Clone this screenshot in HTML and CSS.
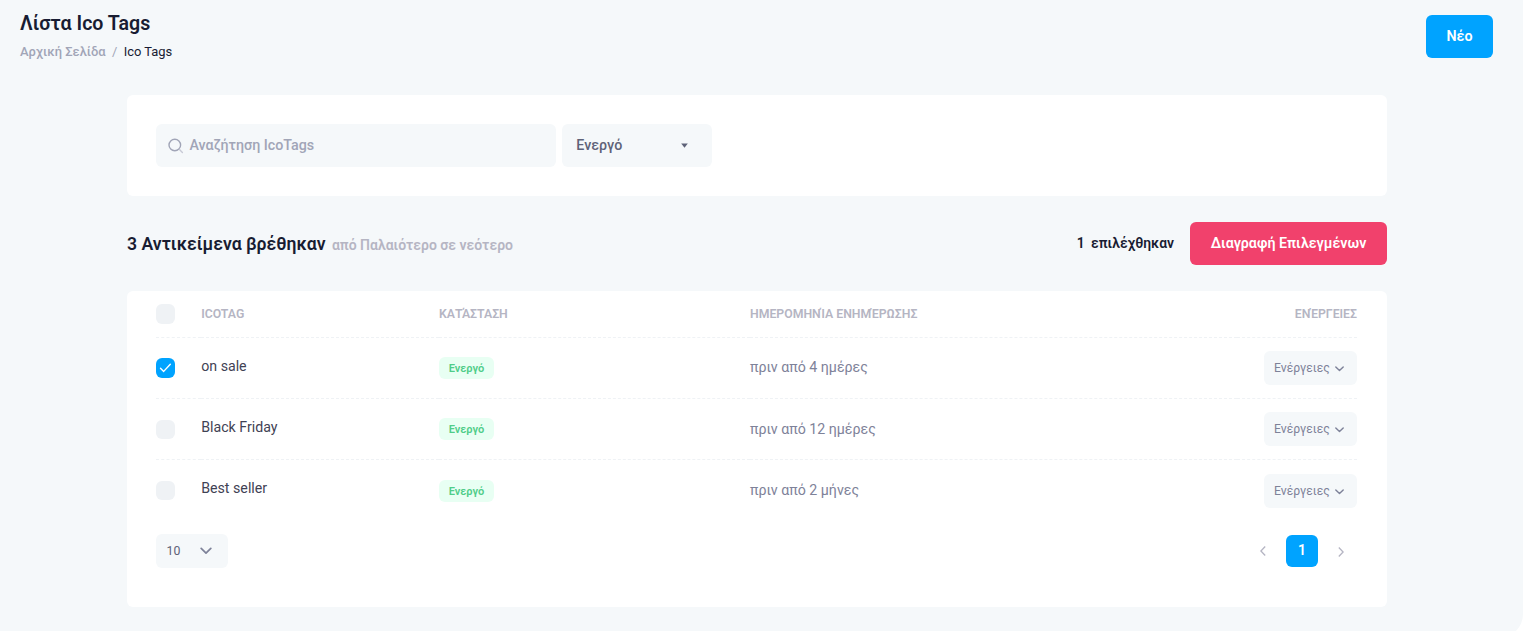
FILE: index.html
```html
<!DOCTYPE html>
<html lang="en">
<head>
<meta charset="utf-8">
<title>Ico Tags</title>
<link rel="stylesheet" href="styles.css">
</head>
<body>
<div class="page">
  <header class="toolbar">
    <div class="toolbar-titles">
      <h1 class="page-title">Λίστα Ico Tags</h1>
      <nav class="breadcrumb"><a class="crumb-link">Αρχική Σελίδα</a><span class="crumb-sep">/</span><span class="crumb-current">Ico Tags</span></nav>
    </div>
    <button class="btn btn-primary">Νέο</button>
  </header>
  <main class="content">
    <section class="card filters">
      <div class="search">
        <svg class="search-icon" width="16" height="16" viewBox="0 0 16 16" fill="none" stroke-linecap="round"><circle cx="6.8" cy="7" r="5.8" stroke="#a1a5b7" stroke-width="1.4"/><path d="M11.5 11.5L14.4 14.4" stroke="#c8cad6" stroke-width="1.4"/></svg>
        <span>Αναζήτηση IcoTags</span>
      </div>
      <div class="status-select">
        <span>Ενεργό</span>
        <svg width="7" height="5" viewBox="0 0 7 5"><path d="M0.2 0.5H6.8L3.5 4.8Z" fill="#5e6278"/></svg>
      </div>
    </section>
    <div class="results-bar">
      <h2 class="results-title">3 Αντικείμενα βρέθηκαν <span class="results-sort">από Παλαιότερο σε νεότερο</span></h2>
      <div class="selected"><span class="selected-count">1</span>επιλέχθηκαν</div>
      <button class="btn btn-danger">Διαγραφή Επιλεγμένων</button>
    </div>
    <section class="card list">
      <div class="row row-head">
        <div class="cell"><span class="check"></span></div>
        <div class="cell">ICOTAG</div>
        <div class="cell">ΚΑΤΆΣΤΑΣΗ</div>
        <div class="cell">ΗΜΕΡΟΜΗΝΊΑ ΕΝΗΜΈΡΩΣΗΣ</div>
        <div class="cell cell-end">ΕΝΈΡΓΕΙΕΣ</div>
      </div>
      <div class="row">
        <div class="cell"><span class="check checked"><svg width="13" height="10" viewBox="0 0 13 10"><path d="M1.5 5.2L4.7 8.4L11.3 1.2" fill="none" stroke="#fff" stroke-width="1.4" stroke-linecap="round" stroke-linejoin="round"/></svg></span></div>
        <div class="cell name">on sale</div>
        <div class="cell"><span class="badge">Ενεργό</span></div>
        <div class="cell date">πριν από 4 ημέρες</div>
        <div class="cell cell-end"><button class="actions">Ενέργειες<svg class="chevron" width="9" height="6" viewBox="0 0 9 6"><path d="M0.8 0.9L4.5 4.6L8.2 0.9"/></svg></button></div>
      </div>
      <div class="row">
        <div class="cell"><span class="check"></span></div>
        <div class="cell name">Black Friday</div>
        <div class="cell"><span class="badge">Ενεργό</span></div>
        <div class="cell date date-mid">πριν από 12 ημέρες</div>
        <div class="cell cell-end"><button class="actions">Ενέργειες<svg class="chevron" width="9" height="6" viewBox="0 0 9 6"><path d="M0.8 0.9L4.5 4.6L8.2 0.9"/></svg></button></div>
      </div>
      <div class="row row-last">
        <div class="cell"><span class="check"></span></div>
        <div class="cell name">Best seller</div>
        <div class="cell"><span class="badge">Ενεργό</span></div>
        <div class="cell date">πριν από 2 μήνες</div>
        <div class="cell cell-end"><button class="actions">Ενέργειες<svg class="chevron" width="9" height="6" viewBox="0 0 9 6"><path d="M0.8 0.9L4.5 4.6L8.2 0.9"/></svg></button></div>
      </div>
      <footer class="list-footer">
        <div class="page-size"><span>10</span><svg class="chevron chevron-lg" width="12" height="8" viewBox="0 0 12 8"><path d="M1.2 1.4L6 6.2L10.8 1.4"/></svg></div>
        <nav class="pager">
          <svg class="pager-arrow" width="6" height="10" viewBox="0 0 6 10"><path d="M5.2 0.5L0.9 5L5.2 9.5"/></svg>
          <span class="pager-page">1</span>
          <svg class="pager-arrow pager-next" width="6" height="10" viewBox="0 0 6 10"><path d="M0.8 0.5L5.1 5L0.8 9.5"/></svg>
        </nav>
      </footer>
    </section>
  </main>
</div>
</body>
</html>
```
FILE: styles.css
```css
* { box-sizing: border-box; }
html, body { margin: 0; height: 631px; overflow: hidden; background: #fff; }
body { font-family: Roboto, "Noto Sans", sans-serif; font-size: 13px; line-height: 1.5; color: #181c32; }
h1, h2 { margin: 0; font-weight: 600; }
button { border: 0; margin: 0; font-family: inherit; }
svg { display: block; flex: none; }
.page { width: 1523px; height: 638px; background: #f5f8fa; border-radius: 0 0 24px 0; }
.toolbar { height: 95px; padding: 15px 30px 0 20px; display: flex; justify-content: space-between; align-items: flex-start; }
.toolbar-titles { margin-top: -3px; }
.page-title { font-size: 19.6px; line-height: 24px; }
.breadcrumb { display: flex; margin-top: 6px; font-size: 12.95px; line-height: 20px; }
.crumb-link { color: #a1a5b7; font-weight: 500; }
.crumb-sep { width: 18px; text-align: center; color: #a1a5b7; }
.crumb-current { color: #181c32; }
.btn { height: 43px; border-radius: 6px; color: #fff; font-size: 14.25px; font-weight: 600; text-align: center; padding: 0 0 1px; }
.btn-primary { width: 67px; background: #00a3ff; }
.btn-danger { width: 197px; background: #f1416c; }
.content { width: 1260px; margin-left: 127px; }
.card { background: #fff; border-radius: 6px; }
.filters { height: 101px; padding: 29px; display: flex; gap: 6px; }
.search, .status-select { height: 43px; background: #f5f8fa; border-radius: 6px; display: flex; align-items: center; font-size: 14.25px; font-weight: 500; }
.search { width: 400px; padding-left: 12px; gap: 5.4px; color: #a1a5b7; }
.status-select { width: 150px; padding: 0 24px 0 14.3px; justify-content: space-between; color: #5e6278; }
.results-bar { height: 95px; display: flex; align-items: center; }
.results-title { flex: 1; font-size: 17.63px; padding-top: 1px; }
.results-sort { color: #b5b5c3; font-size: 14px; margin-left: 2px; }
.selected { font-size: 13.9px; font-weight: 600; margin-right: 16px; }
.selected-count { margin-right: 6.5px; }
.list { height: 316px; padding: 0 30px 0 29px; }
.row { display: grid; grid-template-columns: 45.2px 237.8px 311px 1fr 120px; height: 61px; }
.row-head { height: 47px; color: #b5b5c3; font-size: 12.27px; font-weight: 600; }
.cell { display: flex; align-items: center; border-bottom: 1px dashed #eff2f5; }
.row-last .cell { border-bottom: 0; }
.cell-end { justify-content: flex-end; }
.check { width: 19px; height: 19px; border-radius: 6px; background: #eff2f5; display: flex; align-items: center; justify-content: center; }
.row-head .check, .checked { height: 20px; }
.checked { background: #00a3ff; }
.name { font-size: 14.2px; color: #3f4254; padding-bottom: 3px; }
.badge { width: 55px; height: 22px; border-radius: 6px; background: #e8fff3; color: #50cd89; font-size: 11.05px; font-weight: 600; line-height: 23px; text-align: center; }
.date { font-size: 14.2px; color: #7e8299; }
.date-mid { padding-top: 1px; }
.actions { width: 93px; height: 34px; border-radius: 6px; background: #f5f8fa; color: #7e8299; font-size: 12.2px; font-weight: 400; display: flex; align-items: center; padding: 0 0 1px 10px; gap: 5px; }
.actions .chevron { margin-top: 3px; }
.row-last .actions { padding-bottom: 0; }
.row-last .actions .chevron { margin-top: 2px; }
.chevron { fill: none; stroke: #7e8299; stroke-width: 1.4; stroke-linecap: round; stroke-linejoin: round; }
.chevron-lg { stroke-width: 1.7; }
.list-footer { display: flex; justify-content: space-between; align-items: flex-start; padding-top: 13px; }
.page-size { width: 72px; height: 34px; border-radius: 6px; background: #f5f8fa; color: #5e6278; font-size: 12.3px; display: flex; align-items: center; justify-content: space-between; padding: 0 16px 0 10.5px; }
.pager { display: flex; align-items: center; gap: 20px; padding: 1px 13px 0 0; }
.pager-arrow { fill: none; stroke: #b5b5c3; stroke-width: 1.3; }
.pager-next { margin-top: 2px; }
.pager-page { width: 32px; height: 32px; border-radius: 6px; background: #00a3ff; color: #fff; font-size: 14px; font-weight: 600; line-height: 31px; text-align: center; }
```
